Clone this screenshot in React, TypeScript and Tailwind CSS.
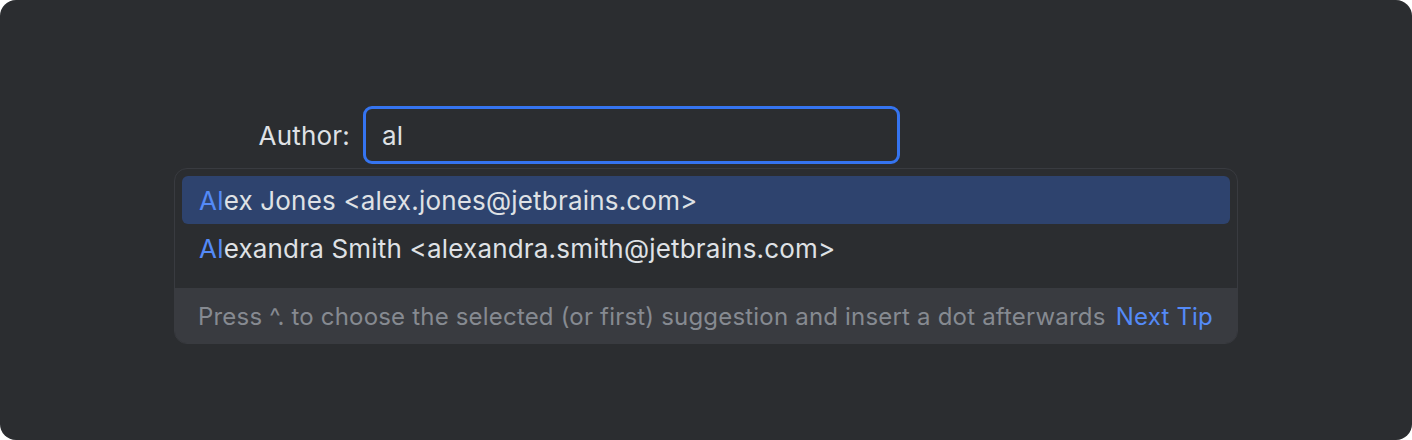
const SUGGESTIONS = [
  { match: "Al", rest: "ex Jones <alex.jones@jetbrains.com>", selected: true },
  {
    match: "Al",
    rest: "exandra Smith <alexandra.smith@jetbrains.com>",
    selected: false,
  },
];

export default function App() {
  return (
    <div className="h-[440px] w-[1412px] bg-white font-['Inter','Noto_Sans',sans-serif] tracking-[0.19px]">
      <div className="flex h-full w-full flex-col rounded-2xl bg-[#2b2d30] pt-[106px]">
        {/* author field */}
        <div className="flex items-center">
          <div className="flex w-[350px] justify-end text-[26px] text-[#dfe1e5]">
            <label>Author:</label>
          </div>
          <div className="ml-[13px] flex h-[58px] w-[537px] items-center rounded-[9px] border-[3px] border-[#3574f0] bg-[#2b2d30] pl-[16px] text-[26px] text-[#dfe1e5]">
            al
          </div>
        </div>

        {/* completion popup */}
        <div className="ml-[174px] mt-[4px] w-[1064px] overflow-hidden rounded-[13px] border border-[#393b40] bg-[#2b2d30]">
          <div className="flex flex-col px-[7px] pb-[16px] pt-[7px]">
            {SUGGESTIONS.map((s) => (
              <div
                key={s.rest}
                className={`flex h-[48px] items-center rounded-[6px] pl-[17px] text-[26px] text-[#dfe1e5] ${
                  s.selected ? "bg-[#2e436e]" : ""
                }`}
              >
                <span className="text-[#548af7]">{s.match}</span>
                <span>{s.rest}</span>
              </div>
            ))}
          </div>
          <div className="flex h-[55px] items-center justify-between bg-[#393b40] pl-[23px] pr-[24px] pt-[2px] text-[24px]">
            <span className="text-[#868a91]">
              Press ^. to choose the selected (or first) suggestion and insert a dot afterwards
            </span>
            <span className="text-[#548af7]">Next Tip</span>
          </div>
        </div>
      </div>
    </div>
  );
}
